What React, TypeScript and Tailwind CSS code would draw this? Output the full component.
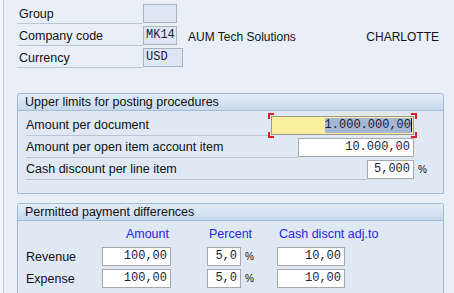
const font = { fontFamily: '"Liberation Sans", Arial, sans-serif' }

function RoField({ value, w }: { value: string; w: string }) {
  return (
    <div
      className={`${w} h-[19px] border border-[#a9b4c2] bg-[#dce7f3] px-[2px] font-['Liberation_Mono',monospace] text-[12px] leading-[17px] text-[#1c1c3a]`}
    >
      {value}
    </div>
  )
}

function Field({ value, w }: { value: string; w: string }) {
  return (
    <div
      className={`${w} h-[19px] border border-[#a8a8a8] bg-white px-[3px] text-right font-['Liberation_Mono',monospace] text-[12px] leading-[17px] text-[#1c1c3a]`}
    >
      {value}
    </div>
  )
}

function TopRow({ label, children }: { label: string; children: React.ReactNode }) {
  return (
    <div className="flex h-[22px] items-center">
      <div className="flex h-full w-[126px] items-center border-b border-[#b9c6d6] pl-[2px] pt-[4px] text-[12.5px]">
        {label}
      </div>
      {children}
    </div>
  )
}

function LimitRow({ label, children }: { label: string; children: React.ReactNode }) {
  return (
    <div className="flex h-[22px] items-center pl-[8px] pr-[29px]">
      <div className="flex h-full flex-1 items-center border-b border-[#b9c6d6] pt-[2px] text-[12.5px]">
        {label}
      </div>
      {children}
    </div>
  )
}

function Corner({ pos }: { pos: string }) {
  return <span className={`absolute h-[6px] w-[6px] border-[#e02020] ${pos}`} />
}

function Box({ title, children, cls }: { title: string; children: React.ReactNode; cls: string }) {
  return (
    <div className={`ml-[13px] w-[427px] rounded-t-[3px] border border-[#a3bad4] bg-[#dfe8f3] ${cls}`}>
      <div className="flex h-[17px] items-center rounded-t-[3px] border-b border-[#a3bad4] bg-gradient-to-b from-[#e4edf7] to-[#c7d9ed] pl-[7px] pt-[1px] text-[12.5px]">
        {title}
      </div>
      {children}
    </div>
  )
}

export default function App() {
  return (
    <div className="flex h-[293px] w-[454px] overflow-hidden bg-[#e9eff7] text-[12px] text-[#111]" style={font}>
      <div className="w-[4px] border-r border-[#c3cfdf] bg-[#f2f6fb]" />
      <div className="flex-1">
        <div className="ml-[13px] mt-[2px]">
          <TopRow label="Group">
            <RoField value="" w="w-[34px]" />
          </TopRow>
          <TopRow label="Company code">
            <RoField value="MK14" w="w-[34px]" />
            <span className="ml-[11px] pt-[4px]">AUM Tech Solutions</span>
            <span className="ml-auto mr-[15px] pt-[4px]">CHARLOTTE</span>
          </TopRow>
          <TopRow label="Currency">
            <RoField value="USD" w="w-[40px]" />
          </TopRow>
        </div>

        <Box title="Upper limits for posting procedures" cls="mt-[25px] h-[101px]">
          <div className="pt-[3px]">
            <LimitRow label="Amount per document">
              <div className="relative ml-[3px]">
                <Corner pos="-left-[3px] -top-[3px] border-l-2 border-t-2" />
                <Corner pos="-right-[3px] -top-[3px] border-r-2 border-t-2" />
                <Corner pos="-left-[3px] -bottom-[3px] border-b-2 border-l-2" />
                <Corner pos="-right-[3px] -bottom-[3px] border-b-2 border-r-2" />
                <div className="flex h-[19px] w-[143px] items-center justify-end border border-[#9d9c88] bg-[#fcee9f] pr-[1px] font-['Liberation_Mono',monospace] text-[12px] text-[#1c1c3a]">
                  <span className="bg-[#a5b7d2] leading-[15px]">1.000.000,00</span>
                  <span className="h-[14px] w-[1px] bg-black" />
                </div>
              </div>
            </LimitRow>
            <LimitRow label="Amount per open item account item">
              <Field value="10.000,00" w="w-[116px]" />
            </LimitRow>
            <div className="flex h-[22px] items-center pl-[8px] pr-[19px]">
              <div className="flex h-full flex-1 items-center border-b border-[#b9c6d6] pt-[2px] text-[12.5px]">
                Cash discount per line item
              </div>
              <Field value="5,000" w="w-[47px]" />
              <span className="ml-[4px] w-[6px] text-[10px]">%</span>
            </div>
          </div>
        </Box>

        <Box title="Permitted payment differences" cls="mt-[9px] h-[100px]">
          <div className="flex h-[23px] items-end pl-[84px] text-[12.5px] text-[#2525e6]">
            <div className="w-[69px] pr-[2px] text-right">Amount</div>
            <div className="ml-[36px] w-[70px] pl-[2px]">Percent</div>
            <div className="pl-[2px]">Cash discnt adj.to</div>
          </div>
          <div className="mt-[3px] flex flex-col gap-[3px]">
            {['Revenue', 'Expense'].map((r) => (
              <div key={r} className="flex h-[19px] items-center pl-[8px]">
                <div className="w-[76px] pt-[2px] text-[12.5px]">{r}</div>
                <Field value="100,00" w="w-[69px]" />
                <div className="ml-[36px]">
                  <Field value="5,0" w="w-[34px]" />
                </div>
                <span className="ml-[4px] w-[32px] text-[10px]">%</span>
                <Field value="10,00" w="w-[68px]" />
              </div>
            ))}
          </div>
        </Box>
      </div>
    </div>
  )
}
